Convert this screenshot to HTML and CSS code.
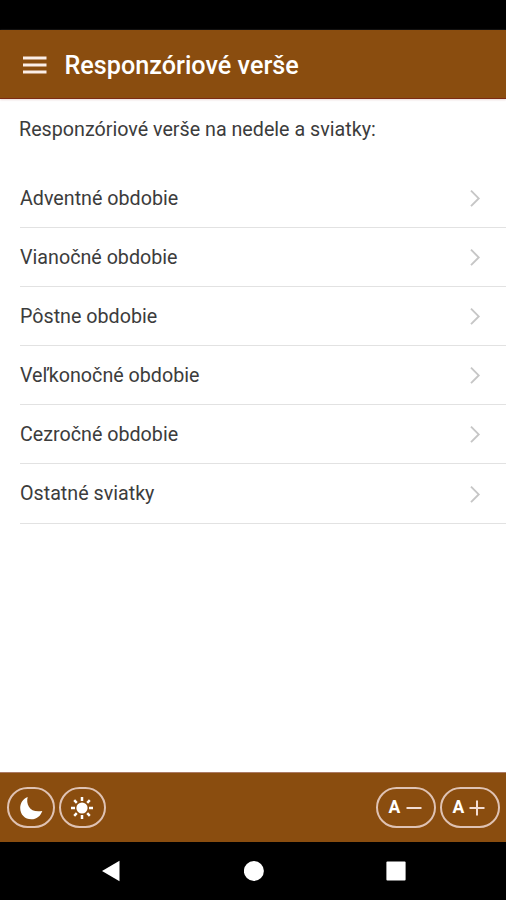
FILE: index.html
```html
<!DOCTYPE html>
<html lang="sk">
<head>
<meta charset="utf-8">
<title>Responzóriové verše</title>
<link rel="stylesheet" href="styles.css">
</head>
<body>
<div class="status"></div>
<header class="header">
  <svg class="menu" viewBox="0 0 24 18"><path d="M0 2h23.500M0 9h23.500M0 16h23.500"/></svg>
  <h1 class="title">Responzóriové verše</h1>
</header>
<main class="content">
  <p class="intro">Responzóriové verše na nedele a sviatky:</p>
  <ul class="list">
    <li class="item"><span>Adventné obdobie</span><svg class="chevron" viewBox="0 0 12 18"><path d="M2 1.700l7.700 7.700-7.700 7.700"/></svg></li>
    <li class="item"><span>Vianočné obdobie</span><svg class="chevron" viewBox="0 0 12 18"><path d="M2 1.700l7.700 7.700-7.700 7.700"/></svg></li>
    <li class="item"><span>Pôstne obdobie</span><svg class="chevron" viewBox="0 0 12 18"><path d="M2 1.700l7.700 7.700-7.700 7.700"/></svg></li>
    <li class="item"><span>Veľkonočné obdobie</span><svg class="chevron" viewBox="0 0 12 18"><path d="M2 1.700l7.700 7.700-7.700 7.700"/></svg></li>
    <li class="item"><span>Cezročné obdobie</span><svg class="chevron" viewBox="0 0 12 18"><path d="M2 1.700l7.700 7.700-7.700 7.700"/></svg></li>
    <li class="item"><span>Ostatné sviatky</span><svg class="chevron" viewBox="0 0 12 18"><path d="M2 1.700l7.700 7.700-7.700 7.700"/></svg></li>
  </ul>
</main>
<footer class="toolbar">
  <div class="group">
    <button class="btn round"><svg class="icon" viewBox="0 0 24 24"><path d="M8.700.9C6.500 8.500 11.500 17.500 23.300 14.900 21.500 20 17.500 23.300 12.400 23.300 5.800 23.300 1.200 18.500 1.200 12 1.200 7 4 2.600 8.700.9Z" fill="#fff"/></svg></button>
    <button class="btn round sun"><svg class="icon" viewBox="0 0 24 24"><circle cx="12" cy="12" r="5.600" fill="#fff"/><path d="M12 1v4M12 19v4M1 12h4M19 12h4M4.200 4.200l2.600 2.600M17.200 17.200l2.600 2.600M4.200 19.800l2.600-2.600M17.200 6.800l2.600-2.600" stroke="#fff" stroke-width="2.500"/></svg></button>
  </div>
  <div class="group">
    <button class="btn"><span>A</span><svg class="sign" viewBox="0 0 16 16"><path d="M.5 8h15"/></svg></button>
    <button class="btn plus"><span>A</span><svg class="sign" viewBox="0 0 16 16"><path d="M.5 8h15M8 .5v15"/></svg></button>
  </div>
</footer>
<nav class="nav">
  <svg viewBox="0 0 20 22"><path d="M18.500.8v20.400L1 11Z" fill="#fff"/></svg>
  <svg viewBox="0 0 20 22"><circle cx="9.900" cy="11" r="10" fill="#fff"/></svg>
  <svg viewBox="0 0 20 22"><rect x=".4" y="1.500" width="19.200" height="19" rx="1" fill="#fff"/></svg>
</nav>
</body>
</html>
```
FILE: styles.css
```css
* { box-sizing: border-box; }
body {
  margin: 0;
  height: 900px;
  display: flex;
  flex-direction: column;
  overflow: hidden;
  background: #fff;
  color: #3c3c3c;
  font-family: Roboto, sans-serif;
}
.status { height: 30px; background: #000; }
.header {
  height: 69px;
  display: flex;
  align-items: center;
  padding: 1px 0 0 23px;
  background: #8a4d0f;
  border-bottom: 1px solid #7c2b13;
  box-shadow: 0 1px 2px #eadada;
}
.menu { width: 24px; height: 18px; fill: none; stroke: #fbeee8; stroke-width: 2.800; }
.title {
  margin: 2px 0 0 17.500px;
  font-size: 25.200px;
  font-weight: 500;
  line-height: 30px;
  color: #fff;
}
.content { flex: 1; }
.intro {
  margin: 19px 0 0 19px;
  font-size: 19.700px;
  line-height: 24px;
}
.list { list-style: none; margin: 27px 0 0 20px; padding: 0; }
.item {
  height: 59.100px;
  display: flex;
  align-items: center;
  justify-content: space-between;
  padding-right: 25px;
  border-bottom: 1px solid #e2e2e2;
  font-size: 19.700px;
}
.chevron { width: 12px; height: 18px; fill: none; stroke: #c6c6c6; stroke-width: 1.900; }
.toolbar {
  height: 70px;
  display: flex;
  align-items: center;
  justify-content: space-between;
  padding: 0 6px 0 7px;
  background: #8a4d0f;
  border-top: 1px solid #ab7a64;
}
.group { display: flex; gap: 4px; }
.btn {
  width: 60px;
  height: 41px;
  display: flex;
  align-items: center;
  justify-content: center;
  gap: 6px;
  padding: 0 1px 0 0;
  border: 2px solid #dfc2b3;
  border-radius: 21px;
  background: none;
  color: #fff;
  font: 700 17.500px/20px Roboto, sans-serif;
}
.btn span { padding-bottom: 1px; }
.plus { gap: 5px; padding-right: 2px; }
.round { width: 48px; }
.sun { width: 47px; }
.icon { width: 24px; height: 24px; }
.sign { width: 16px; height: 16px; fill: none; stroke: #f3ddd4; stroke-width: 2; }
.nav {
  height: 58px;
  display: flex;
  align-items: center;
  justify-content: space-between;
  padding: 0 100px 0 101px;
  background: #000;
}
.nav svg { width: 20px; height: 22px; }
```
